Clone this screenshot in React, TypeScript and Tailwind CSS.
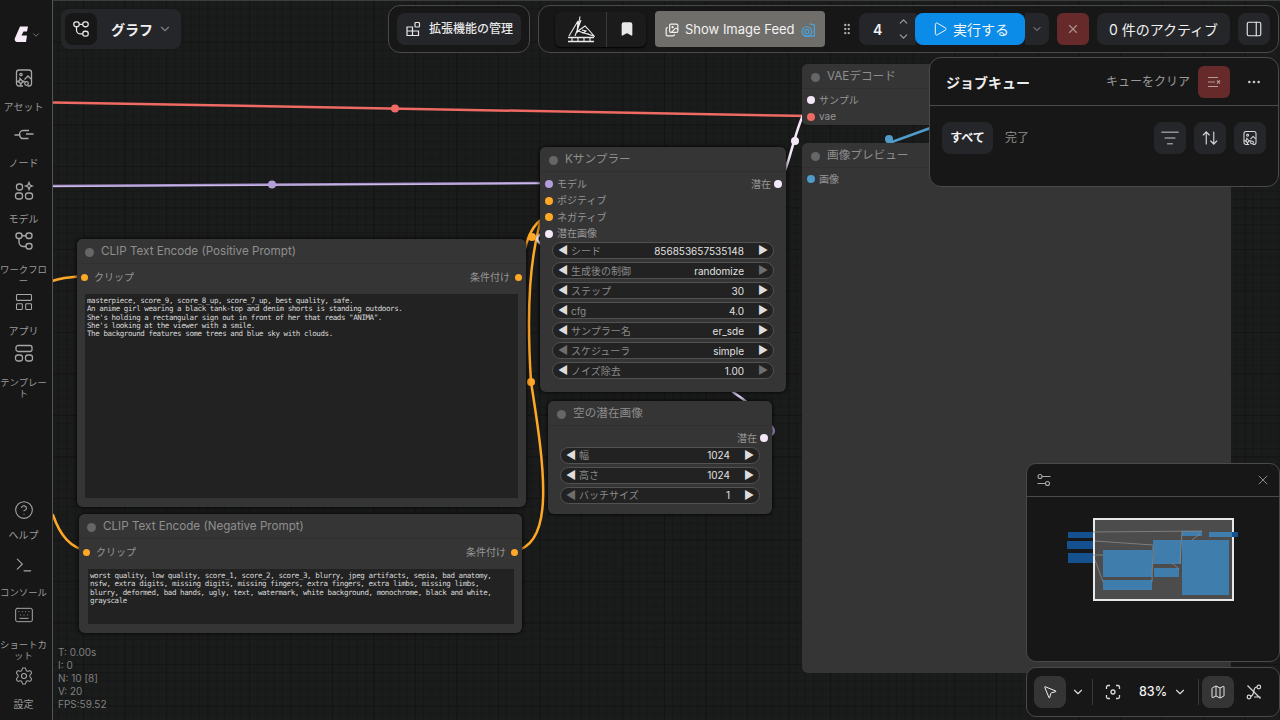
import React from "react";
import {
  ChevronDown, ChevronUp, Play, X, GripVertical, PanelRight, Ellipsis, ListFilter, ArrowUpDown,
  MousePointer2, Map as MapIcon, Terminal, Keyboard, Settings, CircleHelp,
  LayoutPanelLeft, Bookmark, Images,
} from "lucide-react";

const font = "[font-family:Inter,'Noto_Sans_CJK_JP',sans-serif]";

function GraphIcon({ s = 20 }: { s?: number }) {
  return (
    <svg width={s} height={s} viewBox="0 0 20 20" fill="none" stroke="currentColor" strokeWidth="1.4">
      <rect x="2" y="2" width="6" height="5.5" rx="2.4" />
      <rect x="12" y="2" width="6" height="5.5" rx="2.4" />
      <rect x="12" y="12.5" width="6" height="5.5" rx="2.4" />
      <path d="M5 7.5V11a4.5 4.5 0 0 0 4.5 4.5H12M8 4.8h4" />
    </svg>
  );
}
function AssetIcon({ s = 20 }: { s?: number }) {
  return (
    <svg width={s} height={s} viewBox="0 0 20 20" fill="none" stroke="currentColor" strokeWidth="1.3">
      <path d="M9 18H5a2.500 2.500 0 0 1-2.500-2.500V4.500A2.500 2.500 0 0 1 5 2h10a2.500 2.500 0 0 1 2.500 2.500V15.500A2.500 2.500 0 0 1 15 18h-1.500" />
      <circle cx="7" cy="6.500" r="1.200" />
      <path d="M6 10.500l2 2.200 2.200.8-2.200 .8-1.200 2.500-1.200-2.500-2.200-.8 2.200-.8zM17 11l-3-3-3.500 3.500" />
      <circle cx="12.500" cy="15.500" r="1.800" />
    </svg>
  );
}
function NodeIcon() {
  return (
    <svg width="20" height="20" viewBox="0 0 20 20" fill="none" stroke="currentColor" strokeWidth="1.4">
      <path d="M.5 11h6M12 10h7.500M15 6.500H9C7 6.500 5.500 8.500 5.500 10.500s1.500 4 3 4h6" />
    </svg>
  );
}
function ModelIcon() {
  return (
    <svg width="20" height="20" viewBox="0 0 20 20" fill="none" stroke="currentColor" strokeWidth="1.3">
      <rect x="2.500" y="3" width="6" height="6" rx="2.500" />
      <rect x="1.500" y="12" width="7" height="6" rx="2.500" />
      <rect x="11.500" y="12" width="7" height="6" rx="2.500" />
      <path d="M15 1.500l1 2.500 2.500 1-2.500 1-1 2.500-1-2.500-2.500-1 2.500-1z" />
    </svg>
  );
}
function TemplateIcon() {
  return (
    <svg width="20" height="20" viewBox="0 0 20 20" fill="none" stroke="currentColor" strokeWidth="1.3">
      <rect x="2" y="2.500" width="16" height="6" rx="2" />
      <rect x="1.500" y="12" width="7" height="6" rx="2.500" />
      <rect x="11.500" y="12" width="7" height="6" rx="2.500" />
    </svg>
  );
}
function ExtIcon() {
  return (
    <svg width="16" height="16" viewBox="0 0 16 16" fill="none" stroke="currentColor" strokeWidth="1.2">
      <path d="M2 6h5.500v8.500H2zM2 10h11.500v4.500H7.500V6" />
      <rect x="10" y="1.500" width="4.500" height="4.500" rx=".8" />
    </svg>
  );
}
function ClearQueueIcon() {
  return (
    <svg width="16" height="16" viewBox="0 0 16 16" fill="none" stroke="currentColor" strokeWidth="1.1">
      <path d="M2 3.500h10M2 8h7M2 12.500h10M11 6.500l3 3M14 6.500l-3 3" />
    </svg>
  );
}
function Logo() {
  return (
    <svg width="28" height="28" viewBox="0 0 28 28" fill="none" stroke="#ececec" strokeWidth="1.100">
      <path d="M2 21 L11 6 L10 18 L13 1.500 M14 5 L8 21 M11 16 L18 11 L21 14 L27 21 Z M15 15l4 1-3 2 6 1" />
      <path d="M1 22.500h26M1 26.500h26" strokeWidth="1.500" />
      <path d="M5 22.500v4M11 22.500v4M17 22.500v4M23 22.500v4" />
    </svg>
  );
}
function SliderIcon() {
  return (
    <svg width="14" height="14" viewBox="0 0 14 14" fill="none" stroke="currentColor" strokeWidth="1.100">
      <circle cx="3" cy="3.500" r="2" /><path d="M5 3.500h8.500M.5 10.500H8.500" /><circle cx="10.500" cy="10.500" r="2" />
    </svg>
  );
}
function FitIcon() {
  return (
    <svg width="16" height="16" viewBox="0 0 16 16" fill="none" stroke="currentColor" strokeWidth="1.300">
      <path d="M1.500 5V3a1.500 1.500 0 0 1 1.500-1.500h2M11 1.500h2A1.500 1.500 0 0 1 14.500 3v2M14.500 11v2a1.500 1.500 0 0 1-1.500 1.500h-2M5 14.500H3A1.500 1.500 0 0 1 1.500 13v-2" />
      <circle cx="8" cy="8" r="2" />
    </svg>
  );
}
function LinkOffIcon() {
  return (
    <svg width="16" height="16" viewBox="0 0 16 16" fill="none" stroke="currentColor" strokeWidth="1.200">
      <circle cx="12.800" cy="3" r="1.800" /><circle cx="3" cy="13" r="1.800" />
      <path d="M11 3C6 3 10 9 5 12.500M1.500 1.500l13 13M8 13h6.500" />
    </svg>
  );
}

function SideItem({ icon, label, h, mt = "mt-[13px]", size = "text-[10px]" }: { icon: React.ReactNode; label: React.ReactNode; h: string; mt?: string; size?: string }) {
  return (
    <div className={`flex flex-col items-center shrink-0 text-[#a6a6a6] ${h}`}>
      <div className="h-5 flex items-center justify-center">{icon}</div>
      <div className={`${mt} w-[47px] text-center ${size} leading-[11px] whitespace-nowrap text-[#9a9a9a]`}>{label}</div>
    </div>
  );
}

function Sidebar() {
  return (
    <div className={`absolute left-0 top-0 bottom-0 w-[53px] bg-[#171717] border-r border-[#555555] flex flex-col items-center pr-[5px] overflow-hidden ${font}`}>
      <div className="h-[68px] w-full shrink-0 flex items-center pl-[14px] pt-[1px]">
        <svg width="14" height="17" viewBox="0 0 14 17"><path d="M6 .5h8l-1 5H9.500l-2 4H13l-1 6.500H4C1 16 .2 14 1 12z" fill="#f7ecf7" /></svg>
        <ChevronDown size={10} className="ml-[3px] text-[#8a8a8a]" />
      </div>
      <SideItem icon={<AssetIcon />} label="アセット" h="h-[56px]" mt="mt-[14px]" />
      <SideItem icon={<NodeIcon />} label="ノード" h="h-[57px]" mt="mt-[14px]" />
      <SideItem icon={<ModelIcon />} label="モデル" h="h-[50px]" />
      <SideItem icon={<GraphIcon />} label={<>ワークフロ<br />ー</>} h="h-[61px]" size="text-[9.400px]" />
      <SideItem icon={<LayoutPanelLeft size={20} strokeWidth={1.3} className="rotate-90 -scale-y-100" />} label="アプリ" h="h-[51px]" mt="mt-[14px]" />
      <SideItem icon={<TemplateIcon />} label={<>テンプレー<br />ト</>} h="h-[56px]" mt="mt-[14px]" size="text-[9.400px]" />
      <div className="flex-1" />
      <SideItem icon={<CircleHelp size={20} strokeWidth={1.3} />} label="ヘルプ" h="h-[55px]" mt="mt-[10px]" />
      <SideItem icon={<Terminal size={20} strokeWidth={1.4} />} label="コンソール" h="h-[50px]" mt="mt-[12px]" size="text-[9.400px]" />
      <SideItem icon={<Keyboard size={20} strokeWidth={1.2} />} label={<>ショートカ<br />ット</>} h="h-[61px]" mt="mt-[14px]" size="text-[9.400px]" />
      <SideItem icon={<Settings size={20} strokeWidth={1.3} />} label="設定" h="h-[54px]" />
    </div>
  );
}

function Title({ t, dot }: { t: string; dot: string }) {
  return (
    <div className="h-[25px] pt-[2px] shrink-0 flex items-center border-b border-[#303030] bg-[#353535] text-[11.650px] text-[#8e8e8e]">
      <span className={`w-[9px] h-[9px] rounded-full bg-[#666666] shrink-0 ${dot}`} />
      <span className="ml-[7px] whitespace-nowrap">{t}</span>
    </div>
  );
}

function Widget({ label, value, dimL, dimR }: { label: string; value: string; dimL?: boolean; dimR?: boolean }) {
  return (
    <div className="h-[17px] rounded-full border border-[#525252] bg-[#222222] flex items-center px-[5px] text-[10px] leading-none shrink-0">
      <span className={`text-[11px] w-[10px] ${dimL ? "text-[#6e6e6e]" : "text-[#dddddd]"}`}>◀</span>
      <span className="ml-[3px] text-[#8a8a8a]">{label}</span>
      <span className="ml-auto text-[#e0e0e0]">{value}</span>
      <span className={`ml-[14px] text-[11px] w-[10px] ${dimR ? "text-[#6e6e6e]" : "text-[#dddddd]"}`}>▶</span>
    </div>
  );
}

function Row({ l, r, lc, rc }: { l?: string; r?: string; lc?: string; rc?: string }) {
  return (
    <div className="h-[16.500px] flex items-center justify-between text-[10px] text-[#969696] shrink-0">
      <span className="flex items-center gap-[4px]">
        {lc && <span className="w-[8px] h-[8px] rounded-full" style={{ background: lc }} />}
        <span>{l}</span>
      </span>
      <span className="flex items-center gap-[3px] -mr-[1px]">
        <span>{r}</span>
        {rc && <span className="w-[8px] h-[8px] rounded-full" style={{ background: rc }} />}
      </span>
    </div>
  );
}

const POS = `masterpiece, score_9, score_8_up, score_7_up, best quality, safe.
An anime girl wearing a black tank-top and denim shorts is standing outdoors.
She's holding a rectangular sign out in front of her that reads "ANIMA".
She's looking at the viewer with a smile.
The background features some trees and blue sky with clouds.`;
const NEG = `worst quality, low quality, score_1, score_2, score_3, blurry, jpeg artifacts, sepia, bad anatomy,
nsfw, extra digits, missing digits, missing fingers, extra fingers, extra limbs, missing limbs,
blurry, deformed, bad hands, ugly, text, watermark, white background, monochrome, black and white,
grayscale`;

function ClipNode({ cls, title, text, ta }: { cls: string; title: string; text: string; ta: string }) {
  return (
    <div className={`absolute ${cls} rounded-[6px] bg-[#353535] overflow-hidden flex flex-col shadow-[0_0_4px_#000]`}>
      <Title t={title} dot="ml-[8px]" />
      <div className="h-[24px] pt-[2px] px-[3px] flex items-center justify-between text-[10px] text-[#969696] shrink-0">
        <span className="flex items-center gap-[6px]"><span className="w-[7px] h-[7px] rounded-full bg-[#ffa726] ml-[1px]" />クリップ</span>
        <span className="flex items-center gap-[5px]">条件付け<span className="w-[7px] h-[7px] rounded-full bg-[#ffa726] mr-[1px]" /></span>
      </div>
      <div className={`${ta} mt-[6px] mb-[9px] flex-1 bg-[#222222] pt-[3px] px-[2px] font-['DejaVu_Sans_Mono',monospace] text-[7.500px] leading-[8.300px] text-[#dadada] whitespace-pre tracking-[-0.42px]`}>
        {text}
      </div>
    </div>
  );
}

function Wires() {
  const dot = (x: number, y: number, c: string) => <circle cx={x} cy={y} r="4" fill={c} />;
  return (
    <svg className="absolute inset-0" width="1280" height="720" fill="none">
      <g strokeWidth="2.500" strokeLinecap="round">
        <path d="M53 102.500 L810 116" stroke="#ee6a62" />
        {dot(395, 108.500, "#ee6a62")}
        <path d="M53 186 L548 183" stroke="#a892cf" />
        <path d="M53 186.500 L548 183.500" stroke="#e8def8" strokeWidth="0.600" />
        {dot(272, 184.500, "#b39ddb")}
        <path d="M778 183 C 790 170, 794 125, 811 100" stroke="#f4e8f8" />
        {dot(795, 141, "#f4e8f8")}
        <path d="M856 155 L 980 110" stroke="#4f9bc9" />
        {dot(889, 139, "#4f9bc9")}
        <path d="M52 281 C 60 278, 70 277, 84 276" stroke="#ffa726" />
        <path d="M53 515 C 60 535, 70 548, 88 551" stroke="#ffa726" />
        <path d="M518 276 C 525 255, 525 225, 548 216" stroke="#ffa726" />
        <path d="M514 551 C 555 545, 545 470, 531 382 C 527 320, 527 250, 548 200" stroke="#ffa726" />
        {dot(532, 237, "#ffa726")}
        {dot(531, 382, "#ffa726")}
        <path d="M548 233 C 536 233, 535 240, 541 244" stroke="#f4e8f8" />
        <path d="M733 392 C 745 400, 755 408, 765 420" stroke="#d8c8ee" />
        <path d="M766 422 C 777 428, 776 436, 764 438" stroke="#a892cf" />
      </g>
    </svg>
  );
}

function KSampler() {
  return (
    <div className="absolute left-[540px] top-[147px] w-[246px] h-[245px] rounded-[6px] bg-[#353535] overflow-hidden flex flex-col shadow-[0_0_4px_#000]">
      <Title t="Kサンプラー" dot="ml-[9px]" />
      <div className="px-[5px] pt-[4px] flex flex-col">
        <Row l="モデル" lc="#b39ddb" r="潜在" rc="#f4e8f8" />
        <Row l="ポジティブ" lc="#ffa726" />
        <Row l="ネガティブ" lc="#ffa726" />
        <Row l="潜在画像" lc="#f4e8f8" />
      </div>
      <div className="mx-[12px] flex flex-col gap-[3px]">
        <Widget label="シード" value="856853657535148" />
        <Widget label="生成後の制御" value="randomize" dimR />
        <Widget label="ステップ" value="30" />
        <Widget label="cfg" value="4.0" />
        <Widget label="サンプラー名" value="er_sde" />
        <Widget label="スケジューラ" value="simple" dimL />
        <Widget label="ノイズ除去" value="1.00" dimR />
      </div>
    </div>
  );
}

function LatentNode() {
  return (
    <div className="absolute left-[548px] top-[401px] w-[224px] h-[113px] rounded-[6px] bg-[#353535] overflow-hidden flex flex-col shadow-[0_0_4px_#000]">
      <Title t="空の潜在画像" dot="ml-[9px]" />
      <div className="px-[5px] pt-[4px]"><Row r="潜在" rc="#f4e8f8" /></div>
      <div className="mx-[12px] flex flex-col gap-[3px]">
        <Widget label="幅" value="1024" />
        <Widget label="高さ" value="1024" />
        <Widget label="バッチサイズ" value="1" dimL />
      </div>
    </div>
  );
}

function OutNodes() {
  return (
    <>
      <div className="absolute left-[802px] top-[64px] w-[429px] h-[61px] rounded-[6px] bg-[#353535] overflow-hidden flex flex-col">
        <Title t="VAEデコード" dot="ml-[9px]" />
        <div className="px-[5px] pt-[3px]">
          <Row l="サンプル" lc="#f4e8f8" />
          <Row l="vae" lc="#ee6a62" />
        </div>
      </div>
      <div className="absolute left-[802px] top-[143px] w-[429px] h-[530px] rounded-[6px] bg-[#353535] overflow-hidden flex flex-col">
        <Title t="画像プレビュー" dot="ml-[9px]" />
        <div className="px-[5px] pt-[3px]"><Row l="画像" lc="#4f9bc9" /></div>
      </div>
    </>
  );
}

function TopBar() {
  const btn = "h-8 rounded-[8px] bg-[#25262a] flex items-center";
  return (
    <>
      <div className={`absolute left-[61px] top-[9px] w-[120px] h-[40px] rounded-[8px] bg-[#25262a] flex items-center p-[4px] ${font}`}>
        <div className="w-8 h-8 rounded-[8px] bg-[#171717] flex items-center justify-center text-[#e8e8e8]"><GraphIcon s={18} /></div>
        <span className="ml-[14px] text-[14px] font-bold text-[#f0f0f0]">グラフ</span>
        <ChevronDown size={14} className="ml-[5px] text-[#7e7e7e]" />
      </div>
      <div className={`absolute left-[388px] top-[5px] w-[142px] h-[48px] rounded-[12px] border border-[#4a4a4a] bg-[#171717] flex items-center justify-center ${font}`}>
        <div className={`${btn} w-[124px] px-[8px] gap-[8px] text-[#e8e8e8]`}>
          <ExtIcon />
          <span className="text-[12px] font-medium whitespace-nowrap">拡張機能の管理</span>
        </div>
      </div>
      <div className={`absolute left-[538px] top-[5px] w-[741px] h-[48px] rounded-[12px] border border-[#4a4a4a] bg-[#171717] flex items-center pl-[16px] ${font}`}>
        <div className="flex h-[35px] rounded-[6px] bg-[#1b1b1b] shadow-[0_1px_2px_#000]">
          <div className="w-[52px] flex items-center justify-center border-r border-[#3a3a3a]"><Logo /></div>
          <div className="w-[39px] flex items-center justify-center"><Bookmark size={16} fill="#e8e8e8" stroke="#e8e8e8" /></div>
        </div>
        <div className="ml-[9px] w-[170px] h-[36px] rounded-[4px] bg-[#6f6e6a] flex items-center pl-[10px] pt-[2px] gap-[6px] text-[13px] text-[#f2f2f2] whitespace-nowrap">
          <Images size={14} />
          <span>Show Image Feed</span>
          <svg width="15" height="15" viewBox="0 0 14 14" fill="none" stroke="#4aa3df" strokeWidth="1.100"><circle cx="5.500" cy="8" r="4.500" /><circle cx="5.500" cy="8" r="2" /><path d="M8 .8l4.500 1v10.500H3" /></svg>
        </div>
        <GripVertical size={14} className="ml-[15px] text-[#b0b0b0]" />
        <div className="ml-[5px] w-[57px] h-8 rounded-l-[8px] bg-[#25262a] flex items-center">
          <span className="ml-[14px] text-[14px] font-semibold text-[#f0f0f0]">4</span>
          <span className="ml-[15px] flex flex-col text-[#a0a0a0]"><ChevronUp size={13} /><ChevronDown size={13} className="mt-[2px]" /></span>
        </div>
        <div className="w-[110px] h-8 rounded-[8px] bg-[#0b8ce9] flex items-center pl-[17px] gap-[5px] text-[14px] text-[#f4f4f4] -ml-[1px]">
          <Play size={16} strokeWidth={1.500} />
          <span>実行する</span>
        </div>
        <div className="w-[24px] h-8 rounded-r-[8px] bg-[#25262a] flex items-center justify-center"><ChevronDown size={12} className="text-[#a0a0a0]" /></div>
        <div className="ml-[8px] w-8 h-8 rounded-[6px] bg-[#652a29] flex items-center justify-center"><X size={14} className="text-[#a88e8c]" /></div>
        <div className={`ml-[8px] w-[133px] justify-center text-[14px] text-[#f0f0f0] ${btn}`}>0 件のアクティブ</div>
        <div className={`ml-[8px] w-8 justify-center text-[#e8e8e8] ${btn}`}><PanelRight size={18} strokeWidth={1.500} /></div>
      </div>
    </>
  );
}

function JobQueue() {
  const sq = "w-8 h-8 rounded-[8px] bg-[#25262a] flex items-center justify-center text-[#d8d8d8]";
  return (
    <div className={`absolute left-[929px] top-[57px] w-[350px] h-[130px] rounded-[12px] border border-[#4a4a4a] bg-[#171717] ${font}`}>
      <div className="h-[48px] border-b border-[#4a4a4a] flex items-center pl-[16px] pr-[8px]">
        <span className="text-[14px] font-bold text-[#ececec] pt-[1px]">ジョブキュー</span>
        <span className="ml-auto text-[12px] text-[#9a9a9a]">キューをクリア</span>
        <div className="ml-[8px] w-8 h-8 rounded-[6px] bg-[#652a29] flex items-center justify-center text-[#b49a98]"><ClearQueueIcon /></div>
        <div className="ml-[8px] w-8 h-8 flex items-center justify-center text-[#c8c8c8]"><Ellipsis size={16} /></div>
      </div>
      <div className="flex items-center px-[12px] pt-[16px]">
        <div className="w-[51px] h-8 rounded-[8px] bg-[#25262a] flex items-center justify-center text-[12px] font-bold text-[#f4f4f4]">すべて</div>
        <span className="ml-[12px] text-[12px] text-[#8e8e8e]">完了</span>
        <div className="ml-auto flex gap-[8px]">
          <div className={sq}><ListFilter size={20} strokeWidth={1.100} /></div>
          <div className={sq}><ArrowUpDown size={18} strokeWidth={1.500} /></div>
          <div className={sq}><AssetIcon s={16} /></div>
        </div>
      </div>
    </div>
  );
}

function Mini() {
  const blue = "absolute bg-[#3f7eac]";
  const dark = "absolute bg-[#15508f]";
  return (
    <div className={`absolute left-[1026px] top-[463px] w-[254px] h-[199px] rounded-[10px] border border-[#4a4a4a] bg-[#171717] overflow-hidden ${font}`}>
      <div className="h-[33px] border-b border-[#4a4a4a] flex items-center justify-between pl-[10px] pr-[8px] text-[#a8a8a8]">
        <SliderIcon />
        <X size={16} strokeWidth={1.200} />
      </div>
      <div className={`${dark} left-[41px] top-[68px] w-[76px] h-[6px]`} />
      <div className={`${dark} left-[40px] top-[77px] w-[76px] h-[8px]`} />
      <div className={`${dark} left-[41px] top-[89px] w-[76px] h-[10px]`} />
      <div className="absolute left-[66px] top-[54px] w-[141px] h-[83px] border-2 border-[#e8e8e8] bg-[#4c4c4c]" />
      <div className={`${blue} left-[76px] top-[86px] w-[49px] h-[27px]`} />
      <div className={`${blue} left-[76px] top-[116px] w-[49px] h-[10px]`} />
      <div className={`${blue} left-[126px] top-[76px] w-[28px] h-[24px]`} />
      <div className={`${blue} left-[127px] top-[104px] w-[25px] h-[9px]`} />
      <div className={`${blue} left-[155px] top-[67px] w-[20px] h-[5px]`} />
      <div className={`${blue} left-[155px] top-[76px] w-[47px] h-[55px]`} />
      <div className={`${blue} left-[182px] top-[68px] w-[23px] h-[5px]`} />
      <div className={`${dark} left-[205px] top-[68px] w-[6px] h-[5px]`} />
      <svg className="absolute left-0 top-0" width="252" height="197" fill="none" stroke="#8a8a8a" strokeWidth="0.800">
        <path d="M66 68L175 67M68 77L126 81M66 91H76M68 96L76 118M125 118L126 82M155 68L153 100M145 99L152 105M165 76L173 70" />
      </svg>
    </div>
  );
}

function BottomBar() {
  return (
    <div className={`absolute left-[1026px] top-[667px] w-[254px] h-[50px] rounded-[10px] border border-[#4a4a4a] bg-[#171717] flex items-center pl-[7px] text-[#d8d8d8] ${font}`}>
      <div className="w-8 h-8 rounded-[8px] bg-[#353535] flex items-center justify-center text-[#f0f0f0]"><MousePointer2 size={16} strokeWidth={1.500} /></div>
      <ChevronDown size={14} className="ml-[5px]" />
      <div className="ml-[7px] h-[26px] w-px bg-[#3a3a3a]" />
      <span className="ml-[12px]"><FitIcon /></span>
      <span className="ml-[18px] text-[12.500px] font-medium text-[#f0f0f0]">83%</span>
      <ChevronDown size={14} className="ml-[6px]" />
      <div className="ml-[11px] h-[26px] w-px bg-[#3a3a3a]" />
      <div className="ml-[3px] w-8 h-8 rounded-[8px] bg-[#353535] flex items-center justify-center text-[#f0f0f0]"><MapIcon size={16} strokeWidth={1.400} /></div>
      <span className="ml-[12px]"><LinkOffIcon /></span>
    </div>
  );
}

export default function App() {
  return (
    <div className={`relative w-[1280px] h-[720px] overflow-hidden bg-[#1a1b1b] bg-[linear-gradient(#141414_1px,transparent_1px),linear-gradient(90deg,#141414_1px,transparent_1px),linear-gradient(#171717_1px,transparent_1px),linear-gradient(90deg,#171717_1px,transparent_1px)] bg-size-[41.500px_41.500px,41.500px_41.500px,8.300px_8.300px,8.300px_8.300px] ${font}`}>
      <div className="absolute left-0 right-0 top-0 h-px bg-[#3c3c3c]" />
      <Wires />
      <OutNodes />
      <ClipNode cls="left-[77px] top-[239px] w-[449px] h-[268px]" title="CLIP Text Encode (Positive Prompt)" text={POS} ta="mx-[8px]" />
      <ClipNode cls="left-[79px] top-[514px] w-[443px] h-[119px]" title="CLIP Text Encode (Negative Prompt)" text={NEG} ta="ml-[9px] mr-[8px]" />
      <KSampler />
      <LatentNode />
      <div className={`absolute left-[58px] top-[646px] text-[10px] leading-[13px] text-[#808080] ${font}`}>
        <div>T: 0.00s</div><div>I: 0</div><div>N: 10 [8]</div><div>V: 20</div><div>FPS:59.52</div>
      </div>
      <Sidebar />
      <TopBar />
      <JobQueue />
      <Mini />
      <BottomBar />
    </div>
  );
}
